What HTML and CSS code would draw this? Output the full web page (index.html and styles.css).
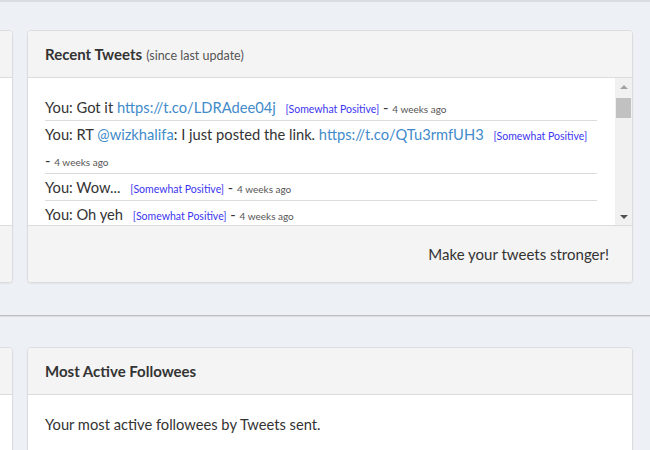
FILE: index.html
```html
<!DOCTYPE html>
<html lang="en">

<head>
    <meta charset="UTF-8">
    <meta name="viewport" content="width=device-width, initial-scale=1.0">
    <title>dashboard</title>
    <link rel="stylesheet" href="styles.css">
</head>

<body>

    <div class="dashboard">

        <div class="row">
            <div class="panel">
                <div class="panel-heading">Your Sentiment</div>
                <div class="panel-body stats"></div>
                <div class="panel-footer">Based on your last 50 tweets</div>
            </div>

            <div class="panel">
                <div class="panel-heading">Recent Tweets <small>(since last update)</small></div>
                <div class="tweet-scroll">
                    <ul class="tweet-list">
                        <li>You: Got it <a href="#">https://t.co/LDRAdee04j</a> <span class="sentiment">[Somewhat Positive]</span> <span class="meta">- <span class="time">4 weeks ago</span></span></li>
                        <li>You: RT <a href="#">@wizkhalifa</a>: I just posted the link. <a href="#">https://t.co/QTu3rmfUH3</a> <span class="sentiment">[Somewhat Positive]</span> <span class="meta">- <span class="time">4 weeks ago</span></span></li>
                        <li>You: Wow... <span class="sentiment">[Somewhat Positive]</span> <span class="meta">- <span class="time">4 weeks ago</span></span></li>
                        <li>You: Oh yeh <span class="sentiment">[Somewhat Positive]</span> <span class="meta">- <span class="time">4 weeks ago</span></span></li>
                        <li>You: Can't wait for the weekend <span class="sentiment">[Positive]</span> <span class="meta">- <span class="time">4 weeks ago</span></span></li>
                        <li>You: Traffic again... <span class="sentiment">[Somewhat Negative]</span> <span class="meta">- <span class="time">4 weeks ago</span></span></li>
                        <li>You: Good morning everyone <span class="sentiment">[Positive]</span> <span class="meta">- <span class="time">1 month ago</span></span></li>
                        <li>You: New post is up <a href="#">https://t.co/Zr4mWq0bTe</a> <span class="sentiment">[Neutral]</span> <span class="meta">- <span class="time">1 month ago</span></span></li>
                    </ul>
                    <div class="scrollbar">
                        <span class="arrow up"></span>
                        <span class="thumb"></span>
                        <span class="arrow down"></span>
                    </div>
                </div>
                <div class="panel-footer">Make your tweets stronger!</div>
            </div>
        </div>

        <hr class="divider">

        <div class="row">
            <div class="panel">
                <div class="panel-heading">Most Mentioned</div>
                <div class="panel-body">Who you mention the most.</div>
            </div>

            <div class="panel">
                <div class="panel-heading">Most Active Followees</div>
                <div class="panel-body">Your most active followees by Tweets sent.</div>
            </div>
        </div>

    </div>

</body>

</html>
```

FILE: styles.css
```css
* {
    box-sizing: border-box;
}

body {
    font-family: Lato, "Open Sans", sans-serif;
    font-size: 15px;
    color: #333;
    background-color: #edf0f4;
    border-top: 2px solid #d9dce1;
    margin: 0;
    padding: 0;
    overflow: hidden;
}

/* the left column starts off to the side */
.dashboard {
    margin-left: -593px;
    padding-top: 28px;
}

.row {
    display: flex;
    gap: 14px;
}

.panel {
    flex: 0 0 606px;
    background-color: #fff;
    border: 1px solid #dcdcdc;
    border-radius: 4px;
    box-shadow: 0 1px 2px rgba(0, 0, 0, 0.06);
    overflow: hidden;
}

.panel-heading {
    height: 47px;
    padding: 0 17px;
    display: flex;
    align-items: center;
    background-color: #f4f4f4;
    border-bottom: 1px solid #dcdcdc;
    font-size: 15px;
    font-weight: bold;
}

.panel-heading small {
    font-size: 12.5px;
    font-weight: normal;
    color: #555;
    margin-left: 4px;
    margin-top: 2px;
}

.panel-body {
    padding: 16px 17px;
    font-size: 14.7px;
    line-height: 26px;
    min-height: 120px;
}

.panel-body.stats {
    height: 147px;
}

.panel-footer {
    height: 57px;
    padding: 0 23px;
    display: flex;
    align-items: center;
    justify-content: flex-end;
    background-color: #f4f4f4;
    border-top: 1px solid #dcdcdc;
}

/* tweet list */
.tweet-scroll {
    display: flex;
    height: 147px;
}

.tweet-list {
    flex: 1;
    list-style-type: none;
    margin: 0;
    padding: 16px 18px 0 17px;
    font-size: 14.7px;
    overflow: hidden;
}

.tweet-list li {
    line-height: 26px;
    border-bottom: 1px solid #dcdcdc;
}

.tweet-list a {
    color: #428bca;
    text-decoration: none;
}

.sentiment {
    font-size: 10.5px;
    line-height: 1;
    color: #3b36f0;
    margin-left: 6px;
}

.meta {
    white-space: nowrap;
}

.time {
    font-size: 10px;
    line-height: 1;
    color: #555;
}

.scrollbar {
    width: 17px;
    background-color: #f1f1f1;
    display: flex;
    flex-direction: column;
    align-items: center;
}

.arrow {
    width: 0;
    height: 0;
    border-left: 4px solid transparent;
    border-right: 4px solid transparent;
}

.arrow.up {
    border-bottom: 4px solid #a3a3a3;
    margin: 7px 0 6px;
}

.arrow.down {
    border-top: 4px solid #505050;
    margin: auto 0 6px;
}

.thumb {
    width: 15px;
    height: 20px;
    margin-top: 3px;
    background-color: #c1c1c1;
}

.divider {
    margin: 32px 0 30px;
    border: 0;
    border-top: 1px solid #bdbfc2;
    border-bottom: 1px solid #dcdee2;
}
```
